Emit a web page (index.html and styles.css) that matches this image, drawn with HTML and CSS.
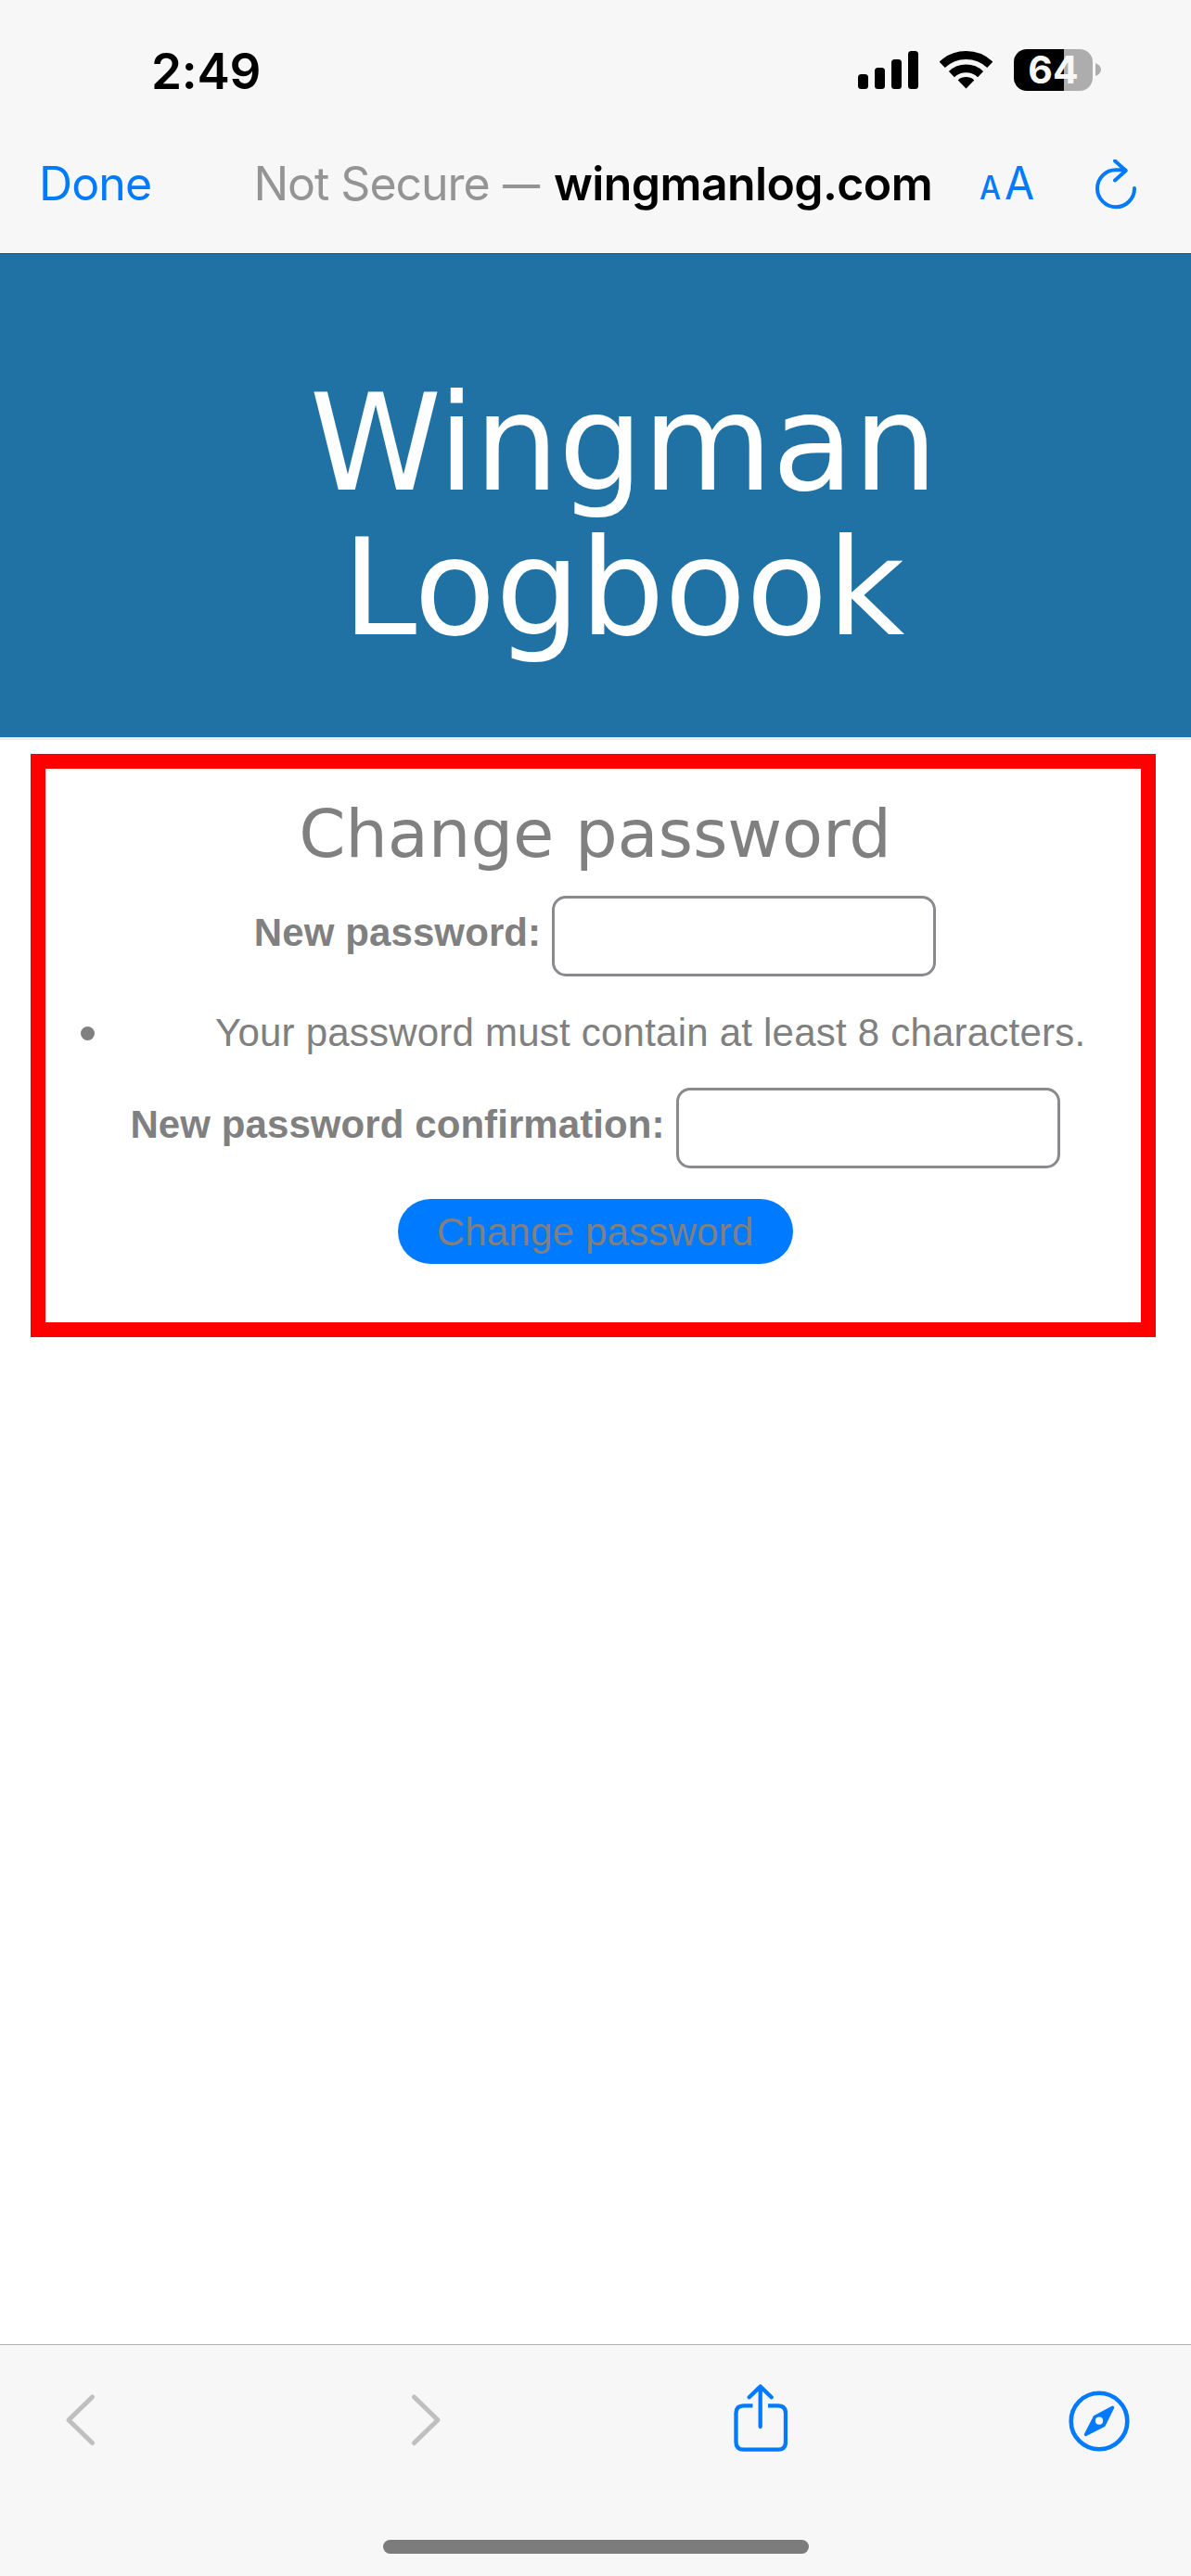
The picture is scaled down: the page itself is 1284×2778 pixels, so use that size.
FILE: index.html
```html
<!DOCTYPE html>
<html lang="en">
<head>
<meta charset="utf-8">
<title>Wingman Logbook</title>
<link rel="stylesheet" href="styles.css">
</head>
<body>
<div class="screen">
  <div class="status-bar">
    <span class="time">2:49</span>
    <svg class="signal" width="66" height="42" viewBox="0 0 66 42" aria-hidden="true">
      <rect x="0" y="26" width="11" height="16" rx="3.5"/>
      <rect x="18" y="19" width="11" height="23" rx="3.5"/>
      <rect x="36" y="10" width="11" height="32" rx="3.5"/>
      <rect x="54" y="1" width="11" height="41" rx="3.5"/>
    </svg>
    <svg class="wifi" width="57" height="42" viewBox="0 0 57 42" aria-hidden="true">
      <path d="M2.7 15.8a37.5 37.5 0 0 1 51.6 0M12.9 26.1a22.8 22.8 0 0 1 31.2 0" fill="none" stroke="#000" stroke-width="8.8"/>
      <path d="M19.7 32.4a13.4 13.4 0 0 1 17.6 0L28.5 41.6z"/>
    </svg>
    <div class="battery"><span class="level">64</span></div>
    <svg class="nub" width="6" height="14" viewBox="0 0 6 14" aria-hidden="true"><path d="M0 0q6 2.500 6 7t-6 7z" fill="#adadad"/></svg>
  </div>
  <div class="nav-bar">
    <span class="done">Done</span>
    <span class="security">Not Secure</span>
    <span class="dash">—</span>
    <span class="domain">wingmanlog.com</span>
    <span class="text-size"><span class="small-a">A</span><span class="big-a">A</span></span>
    <svg class="reload" width="46" height="54" viewBox="0 0 46 54" fill="none" stroke="#007aff" stroke-width="4" stroke-linecap="round" stroke-linejoin="round" aria-hidden="true">
      <path d="M42 31A20 20 0 1 1 22 11.200H32"/>
      <path d="M21 1.500 32.700 12 21 22.500"/>
    </svg>
  </div>
  <header class="banner">
    <h1><span class="word-1">Wingman</span><br><span class="word-2">Logbook</span></h1>
  </header>
  <main>
    <form class="card">
      <h2>Change password</h2>
      <div class="field first">
        <label for="pw1">New password:</label>
        <input id="pw1" type="password">
      </div>
      <ul class="help"><li><span class="bullet"></span>Your password must contain at least 8 characters.</li></ul>
      <div class="field second">
        <label for="pw2">New password confirmation:</label>
        <input id="pw2" type="password">
      </div>
      <button type="button">Change password</button>
    </form>
  </main>
  <footer class="toolbar">
    <svg class="back" width="34" height="60" viewBox="0 0 34 60" fill="none" stroke="#bfbfbf" stroke-width="5" stroke-linecap="round" stroke-linejoin="round" aria-hidden="true"><path d="M29.500 5 4 29.800 29.500 54.500"/></svg>
    <svg class="forward" width="34" height="60" viewBox="0 0 34 60" fill="none" stroke="#bfbfbf" stroke-width="5" stroke-linecap="round" stroke-linejoin="round" aria-hidden="true"><path d="M4.500 5 30 29.800 4.500 54.500"/></svg>
    <svg class="share" width="58" height="74" viewBox="0 0 58 74" fill="none" stroke="#007aff" stroke-width="4.300" aria-hidden="true">
      <path d="M20.500 23.300H10.500Q2.500 23.300 2.500 31.500V62.500Q2.500 70.700 10.500 70.700H48Q56 70.700 56 62.500V31.500Q56 23.300 48 23.300H37"/>
      <path d="M28.700 3.500V46M16.700 14.300 28.700 2.600 40.700 14.300" stroke-linecap="round" stroke-linejoin="round"/>
    </svg>
    <svg class="compass" width="66" height="66" viewBox="0 0 66 66" aria-hidden="true">
      <circle cx="33" cy="33" r="30.300" fill="none" stroke="#007aff" stroke-width="4.600"/>
      <path d="M47.500 18.200 28.300 28.500 18.500 47.500 38 37.500z" fill="#007aff" stroke="#007aff" stroke-width="3.500" stroke-linejoin="round"/>
      <circle cx="33" cy="32.700" r="4.100" fill="#f7f7f7"/>
    </svg>
  </footer>
  <div class="home"><div class="home-indicator"></div></div>
</div>
</body>
</html>
```
FILE: styles.css
```css
* { box-sizing: border-box; }
body { margin: 0; background: #fff; }
.screen { width: 1284px; height: 2778px; display: flex; flex-direction: column; overflow: hidden; background: #fff; }

.status-bar { height: 150px; flex: none; display: flex; align-items: center; padding-left: 163px; background: #f7f7f7; font-family: Inter, sans-serif; }
.time { width: 762px; padding-top: 4px; font-size: 53px; font-weight: 600; line-height: 60px; letter-spacing: -0.2px; }
.signal { margin-right: 22px; }
.wifi { margin-right: 23px; }
.battery { width: 85px; height: 45px; border-radius: 14px; background: linear-gradient(90deg, #000 54px, #adadad 54px); color: #f7f7f7; text-align: center; margin-right: 3px; }
.level { font-size: 41px; font-weight: 700; line-height: 45px; }

.nav-bar { height: 123px; flex: none; display: flex; align-items: center; padding: 0 0 27px 42px; background: #f7f7f7; font: 50px/60px Inter, sans-serif; white-space: nowrap; }
.done { width: 231.5px; color: #007aff; letter-spacing: -0.87px; }
.security { width: 268.5px; color: #949494; letter-spacing: -1.05px; }
.dash { width: 55px; color: #949494; font-family: "Liberation Sans", sans-serif; font-size: 40px; line-height: 60px; font-weight: bold; }
.domain { width: 459px; font-weight: 600; letter-spacing: -0.61px; }
.text-size { display: flex; align-items: baseline; width: 125px; padding-top: 3px; color: #007aff; }
.small-a { width: 27px; font-size: 35px; font-weight: 500; transform: scaleX(.93); transform-origin: left; }
.big-a { font-size: 49px; transform: scaleX(.95); transform-origin: left; }
.reload { margin-top: 2px; }

.banner { height: 525px; flex: none; border-top: 1px solid #1b4f70; border-bottom: 3px solid #ededed; background: #2072a5; color: #fff; padding: 126px 0 0 60px; }
h1 { margin: 0; font: 144px/156px "DejaVu Sans", sans-serif; text-align: center; }
.word-1 { letter-spacing: -0.74px; }
.word-2 { letter-spacing: -0.3px; }

main { flex: 1; padding: 15px 38px 0 33px; font-family: "Liberation Sans", Arial, sans-serif; font-size: 42px; color: #808080; }
.card { height: 629px; border: 16px solid #f00; display: flex; flex-direction: column; align-items: center; }
h2 { margin: 27px 0 24px 4px; font: 72px/86px "DejaVu Sans", sans-serif; letter-spacing: -0.12px; white-space: nowrap; }
.field { display: flex; height: 87px; flex: none; white-space: nowrap; margin-left: 4px; }
.field label { font-weight: bold; line-height: 48px; padding-top: 16px; }
.field input { width: 414px; height: 87px; border: 3px solid #8a898e; border-radius: 15px; background: #fff; padding: 0; margin: 0 0 0 12px; }
.first label { letter-spacing: 0.1px; }
.second label { letter-spacing: 0.08px; }
.help { list-style: none; align-self: stretch; margin: 0; padding: 37px 0 35px 38px; }
.help li { display: flex; align-items: center; height: 48px; line-height: 48px; letter-spacing: 0.22px; white-space: nowrap; }
.bullet { width: 15px; height: 15px; border-radius: 50%; background: #808080; margin-right: 130px; }
button { margin: 33px 0 0 4px; width: 426px; height: 70px; flex: none; border: 0; border-radius: 35px; background: #007aff; color: #808080; font: 42px/70px "Liberation Sans", Arial, sans-serif; letter-spacing: 0.2px; padding: 1px 0 0; white-space: nowrap; }

.toolbar { height: 160px; flex: none; display: flex; align-items: flex-start; border-top: 1px solid #b0b0b0; background: #f7f7f7; padding: 42px 0 0 70px; }
.back, .forward { margin-top: 9px; }
.back { margin-right: 338px; }
.forward { margin-right: 315px; }
.share { margin-right: 303px; }
.compass { margin-top: 7px; }
.home { height: 90px; flex: none; background: #f7f7f7; display: flex; justify-content: center; padding-top: 51px; }
.home-indicator { width: 459px; height: 15px; border-radius: 8px; background: #7c7c7c; }
```
